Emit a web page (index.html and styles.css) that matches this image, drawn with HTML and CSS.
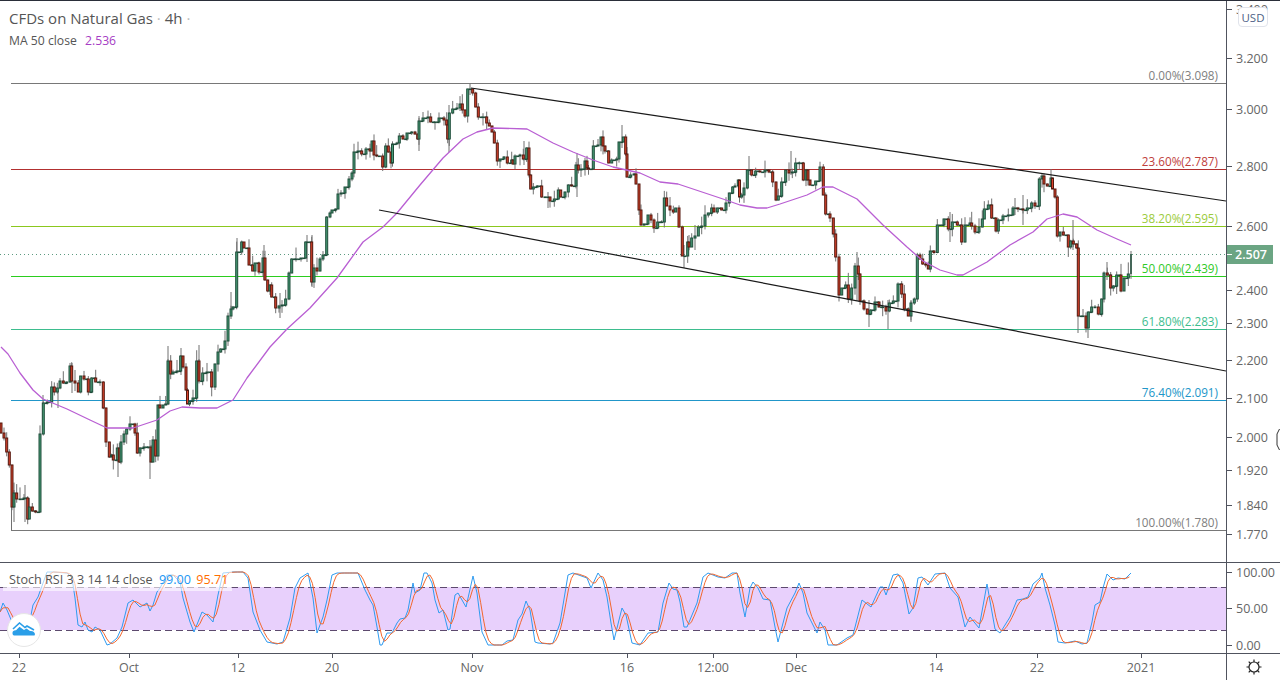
FILE: index.html
```html
<!DOCTYPE html>
<html lang="en">
<head>
    <meta charset="UTF-8">
    <title>CFDs on Natural Gas</title>
    <link rel="stylesheet" href="styles.css">
</head>
<body>
    <div class="chart">
        <!-- price pane -->
        <div class="pane mainPane">
            <svg class="plot" id="mainPlot" width="1226" height="561" viewBox="0 1 1226 561"></svg>
            <svg class="axis" id="mainAxis" width="53" height="561" viewBox="1227 1 53 561"></svg>
            <div class="legend">
                <div class="title">CFDs on Natural Gas <span class="dot">·</span> 4h <span class="dot">·</span></div>
                <div class="study">MA 50 close <span class="maValue">2.536</span></div>
            </div>
            <div class="currency">USD</div>
        </div>

        <!-- stoch rsi pane -->
        <div class="pane stochPane">
            <svg class="plot" id="stochPlot" width="1226" height="90" viewBox="0 563 1226 90"></svg>
            <svg class="axis" id="stochAxis" width="53" height="90" viewBox="1227 563 53 90"></svg>
            <div class="stochLegend">Stoch RSI 3 3 14 14 close <span class="kValue">99.00</span> <span class="dValue">95.71</span></div>
            <div class="logo">
                <svg width="24" height="16" viewBox="0 1.500 24 16">
                    <path class="logoFill" d="M1 14.500C-0.500 11.500 1.500 9.500 4 9.800L7.500 6.200L12 9.500L14.500 8L18 10.500C21.500 10 24 12.500 22.500 15L2 15Z"/>
                    <path class="logoLine" d="M1 8.500L7.500 2.500L13 7L15 5.500L22 9.500"/>
                </svg>
            </div>
        </div>

        <!-- time scale -->
        <div class="pane timePane">
            <svg class="plot" id="timePlot" width="1226" height="26" viewBox="0 654 1226 26"></svg>
            <div class="corner">
                <svg width="20" height="20" viewBox="0 0 20 20">
                    <circle class="gear" cx="10" cy="10" r="5"/>
                    <path class="gear" d="M10 2.500V5M10 15V17.500M2.500 10H5M15 10H17.500M4.700 4.700L6.500 6.500M13.500 13.500L15.300 15.300M15.300 4.700L13.500 6.500M6.500 13.500L4.700 15.300"/>
                </svg>
            </div>
        </div>
    </div>

    <script src="chart.js"></script>
</body>
</html>
```

FILE: styles.css
```css
body {
    margin: 0;
    background-color: #fff;
    font-family: "Open Sans", "Liberation Sans", sans-serif;
    color: #555;
    overflow: hidden;
}

.chart {
    height: 679px;
    border-top: 1px solid #2a2e39;
}

.pane {
    position: relative;
    display: flex;
    border-bottom: 1px solid #50535e;
}

.mainPane {
    height: 561px;
}

.stochPane {
    height: 90px;
}

.timePane {
    height: 26px;
    border-bottom: none;
}

.plot {
    display: block;
    flex: none;
}

.axis {
    display: block;
    flex: none;
    border-left: 1px solid #50535e;
}

/* legends over the plot */
.legend {
    position: absolute;
    top: 8px;
    left: 9px;
}

.title {
    font-size: 15px;
    line-height: 19px;
}

.dot {
    color: #bbb;
}

.study {
    margin-top: 5px;
    font-size: 12.200px;
    line-height: 16px;
}

.maValue {
    margin-left: 5px;
    color: #a63cc4;
}

.currency {
    position: absolute;
    top: 6px;
    left: 1238px;
    width: 28px;
    height: 18px;
    border: 1px solid #e0e3eb;
    border-radius: 4px;
    background-color: #fff;
    color: #4d5f86;
    font-size: 11.500px;
    line-height: 19px;
    text-align: center;
}

.stochLegend {
    position: absolute;
    top: 7px;
    left: 3px;
    padding: 0 4px 0 6px;
    height: 21px;
    background-color: rgba(255, 255, 255, 0.6);
    font-size: 12.600px;
    line-height: 19px;
    white-space: pre;
}

.kValue {
    margin-left: 3px;
    color: #2196f3;
}

.dValue {
    margin-left: 2px;
    color: #ff6d00;
}

.logo {
    position: absolute;
    top: 50px;
    left: 7px;
    width: 32px;
    height: 32px;
    display: flex;
    align-items: center;
    justify-content: center;
    border: 1px solid #e6e6e6;
    border-radius: 50%;
    background-color: #fff;
}

.logoFill {
    fill: #2a9ee8;
}

.logoLine {
    fill: none;
    stroke: #2a9ee8;
    stroke-width: 1.600;
}

.corner {
    width: 53px;
    flex: none;
    display: flex;
    align-items: center;
    justify-content: center;
    border-left: 1px solid #50535e;
}

.gear {
    fill: none;
    stroke: #222;
    stroke-width: 1.200;
}

/* svg text */
.tick {
    font-size: 12.500px;
    fill: #666;
}

.fibLabel {
    font-size: 11.700px;
    text-anchor: end;
}

.timeLabel {
    text-anchor: middle;
}

.priceLabel {
    font-size: 12.500px;
    font-weight: 600;
    fill: #fff;
}
```

FILE: chart.js
```javascript
// closes as [x, y] in page pixels, open = previous close
const closes = [
    [1,433],[4,438],[6.7,452],[9.3,465],[12,507],[14,493],[16.7,499],[20,499],[24,498],[27.7,519],
    [29.3,507],[32.3,511],[35.7,512],[40,434],[43.3,403],[47.3,402],[51.7,387],[54.3,392],[57.3,388],[60,381],
    [63.3,383],[66.7,382],[70,366],[71.7,381],[75,383],[78.3,392],[80.7,376],[84,379],[88.3,392],[91.7,378],
    [95.7,382],[100,382],[103.3,408],[106,442],[109.3,457],[111.5,455],[113.3,460],[117.3,448],[119.3,462],[121,442],
    [124,434],[126.7,429],[130,424],[135,433],[137.3,453],[140,448],[144,447],[148.3,447],[151,462],[153,440],
    [155.7,456],[158,405],[160,408],[163,405],[165.7,404],[168,361],[170.7,374],[173,372],[177,371],[180.7,356],
    [183,367],[186,390],[187.5,404],[189.5,401],[193,398],[196.7,361],[199,381],[202.7,373],[207,372],[211.7,387],
    [215,364],[218,352],[220.7,349],[225,341],[228,316],[231,309],[233,307],[236.7,252],[241.7,242],[244,248],
    [249,265],[252.7,271],[255,263],[259,272],[263,258],[265,280],[267.7,291],[270,285],[271.7,297],[275.7,308],
    [279,306],[282,305],[285.7,299],[289,273],[291.7,259],[296,259],[301,258],[305.7,242],[308,242],[311.7,282],
    [314,268],[317,271],[320,259],[323,255],[326.7,217],[330,213],[332,210],[335.7,209],[338,194],[341,193],
    [345,187],[349,179],[352,173],[354,152],[358,151],[361.7,154],[366,149],[370,151],[372,141],[374,155],
    [376.7,156],[382.7,167],[385.7,146],[388.3,152],[391,163],[392.5,144],[397,143],[399.3,136],[403,139],[407,133],
    [411.7,132],[415,134],[417.7,139],[419,121],[423,118],[428,117],[430.7,122],[435,122],[439,118],[444,120],
    [446.7,125],[447.7,139],[449.3,113],[452.7,109],[457,108],[460,104],[462.3,110],[465,116],[467.7,89],[472.7,93],
    [475.7,107],[478.3,117],[483,117],[486.7,123],[489.3,126],[492,132],[494.3,143],[497.3,161],[500,159],[504,157],
    [507.3,163],[511.7,160],[513,164],[515,156],[520,155],[523.3,159],[526.7,148],[529,175],[530.7,189],[533.3,187],
    [537.3,186],[541.7,197],[545,197],[550,201],[554.3,199],[558.3,190],[560.7,197],[565,192],[568.3,185],[571.7,186],
    [576,165],[578.3,170],[581,169],[585,161],[587,168],[588.5,169],[593.3,146],[598,145],[601,137],[603,146],
    [605,151],[608.7,163],[611.7,160],[616.7,159],[619,142],[623.3,137],[625.7,154],[627,177],[630.7,175],[634,174],
    [636,184],[639,210],[641,225],[644,224],[648,215],[651,220],[654,228],[657.7,222],[661.7,222],[664.3,198],
    [666.7,206],[670,210],[673.3,212],[675.7,208],[679,227],[682.3,256],[687.7,242],[689,247],[691.7,238],[695,236],
    [698.3,227],[701.7,226],[705,215],[708.3,213],[711.7,208],[714,212],[717.3,208],[721.7,210],[726,203],[729.3,193],
    [732.7,187],[735,186],[738.3,180],[739.5,197],[741.7,195],[744,188],[747.3,170],[751.7,175],[755.7,171],[760,172],
    [765,170],[769,172],[772.7,182],[776,200],[778.3,196],[781.7,182],[785.7,170],[789,173],[792.3,172],[795.7,163],
    [799.3,163],[803.3,180],[806,170],[808,180],[810,185],[815.7,181],[820,167],[823.3,195],[825.7,214],[830,218],
    [833.3,234],[835.7,257],[839,295],[841.7,288],[845.7,285],[848.3,299],[851.7,288],[855,266],[858.3,274],[860,301],
    [864,309],[867.3,314],[870.7,310],[875,302],[879,307],[882.7,307],[886,311],[889.3,303],[893.3,301],[898,284],
    [901.7,294],[904.3,309],[908.3,316],[911,303],[914.3,299],[917.3,255],[920,259],[922.7,264],[925.7,265],[928.3,269],
    [930.3,251],[934,252.5],[937.3,225],[944,219],[948.3,229],[952.3,222],[957.3,225],[961.7,242],[965,225],[970,223],
    [971.7,226],[975,232],[979,227],[982.3,219],[984.3,209],[988.3,205],[991.7,218],[996,231],[998.3,220],[1003,216],
    [1008.3,215],[1013,208],[1018,209],[1023,210],[1027.3,208],[1031.7,203],[1035,206],[1039.3,179],[1042,176],[1044,184],
    [1047.3,186],[1051,178],[1052.5,189],[1055,197],[1057.3,236],[1060,232],[1063.3,235],[1068.3,247],[1070.7,241],[1073.3,244],
    [1076.7,248],[1078.3,316],[1083,316],[1086,328],[1088.3,312],[1091.7,307],[1095,307],[1098.3,314],[1101.7,299],[1104,273],
    [1107.3,275],[1110.7,288],[1113.3,286],[1116.7,275],[1121,291],[1124,278],[1128.3,274],[1131,254]
];

// long wicks that stand out: [x, top, bottom]
const spikes = [
    [11.5,465,530],[14,490,522],[25,485,522],[43,395,420],[58,390,408],[72,363,393],[118,448,477],[150,440,479],
    [168,346,404],[181,348,375],[199,345,381],[231,292,312],[237,238,260],[264,245,280],[280,293,318],[307,235,262],
    [312,235,287],[419,118,151],[449,105,152],[470,84,95],[524,141,165],[577,153,197],[622,125,148],[548,192,208],
    [749,156,175],[791,151,175],[684,245,268],[695,225,250],[857,252,301],[888,300,329],[869,300,327],[911,300,322],
    [950,212,242],[1015,198,215],[1023,195,225],[1073,220,250],[1078,316,333],[1088,312,338],[1107,262,280]
];

const maLine = [
    [1,347],[8,354],[20,373],[33,390],[43,399],[67,409],[90,420],[107,428],[133,428],[157,420],[170,411],[182,407],
    [200,408],[217,408],[233,400],[247,378],[270,347],[287,329],[310,308],[337,278],[363,242],[383,227],[397,213],
    [420,185],[443,158],[463,139],[477,132],[493,128],[527,129],[553,143],[573,152],[593,160],[613,167],[640,173],
    [660,182],[678,184],[723,199],[740,205],[757,208],[767,208],[780,204],[807,195],[823,187],[833,187],[857,199],
    [883,225],[907,247],[923,261],[940,270],[957,275],[963,275],[987,262],[1010,245],[1033,232],[1047,219],[1063,214],
    [1077,217],[1097,230],[1117,239],[1131,245]
];

const fibLevels = [
    { y: 83.5, color: '#787878', text: '#808080', label: '0.00%(3.098)', labelY: 80 },
    { y: 169.5, color: '#b23030', text: '#c0403c', label: '23.60%(2.787)', labelY: 166 },
    { y: 226.5, color: '#8bc81e', text: '#9ccb3c', label: '38.20%(2.595)', labelY: 223 },
    { y: 276.5, color: '#2bcd1e', text: '#2fc926', label: '50.00%(2.439)', labelY: 273 },
    { y: 329.5, color: '#3dbd8e', text: '#3dbd8e', label: '61.80%(2.283)', labelY: 326 },
    { y: 400.5, color: '#2196c9', text: '#2196c9', label: '76.40%(2.091)', labelY: 397 },
    { y: 530.5, color: '#787878', text: '#808080', label: '100.00%(1.780)', labelY: 527 }
];

const priceTicks = [
    ['3.400', 9], ['3.200', 58], ['3.000', 109], ['2.800', 166], ['2.600', 226], ['2.400', 290],
    ['2.300', 323], ['2.200', 360], ['2.100', 398], ['2.000', 437], ['1.920', 470], ['1.840', 505], ['1.770', 534]
];

const stochTicks = [['100.00', 572], ['50.00', 608], ['0.00', 645]];

const timeTicks = [
    ['22', 19], ['Oct', 129], ['12', 238], ['20', 332], ['Nov', 472], ['16', 627],
    ['12:00', 713], ['Dec', 796], ['14', 936], ['22', 1037], ['2021', 1141]
];

const kLine = [
    [0,612],[3,603],[7,610],[12,622],[30,620],[33,605],[38,597],[47,572],[53,572],[67,573],[72,578],[75,598],[78,625],
    [82,627],[85,622],[88,630],[92,632],[95,627],[100,630],[107,645],[110,644],[117,638],[122,627],[128,603],[133,600],
    [140,607],[147,603],[150,611],[153,605],[157,592],[160,588],[167,575],[173,575],[180,582],[183,598],[190,622],
    [194,632],[202,612],[207,615],[213,622],[218,595],[223,573],[233,572],[243,572],[248,578],[253,612],[260,630],
    [267,642],[277,644],[283,642],[290,618],[295,588],[300,578],[308,573],[313,598],[317,633],[320,625],[323,617],
    [327,600],[332,575],[337,573],[358,573],[365,590],[370,600],[373,605],[377,627],[380,645],[382,645],[387,633],
    [392,633],[397,623],[400,619],[405,618],[408,610],[413,583],[415,593],[420,590],[424,573],[427,573],[432,583],
    [435,600],[439,613],[443,610],[448,630],[450,629],[455,595],[458,593],[466,607],[473,576],[477,593],[482,632],
    [488,645],[502,645],[507,641],[513,640],[518,620],[522,614],[526,601],[530,610],[535,642],[538,643],[550,644],
    [553,643],[560,623],[568,575],[573,573],[587,578],[591,588],[598,573],[603,580],[607,597],[611,623],[614,640],
    [622,608],[626,615],[632,643],[640,645],[648,633],[658,632],[663,603],[669,583],[673,589],[677,590],[680,602],
    [684,627],[687,627],[692,615],[697,603],[703,577],[708,573],[718,577],[725,578],[732,573],[737,573],[740,593],
    [745,617],[750,588],[753,582],[758,588],[763,599],[770,600],[775,627],[778,642],[787,608],[795,593],[799,583],
    [803,593],[807,613],[813,625],[817,633],[820,622],[825,630],[828,645],[837,645],[847,638],[853,635],[862,600],
    [871,607],[880,587],[883,587],[886,595],[893,575],[898,574],[903,583],[909,614],[913,608],[918,578],[922,577],
    [928,585],[935,574],[945,573],[950,588],[958,597],[965,627],[970,617],[979,628],[987,584],[995,629],[1000,633],
    [1010,617],[1017,600],[1023,599],[1028,597],[1033,584],[1040,578],[1042,573],[1045,588],[1050,605],[1055,625],
    [1058,642],[1065,643],[1075,641],[1082,644],[1087,643],[1092,622],[1095,605],[1100,602],[1103,588],[1107,574],
    [1113,580],[1118,578],[1125,579],[1131,573]
];

function points(list) {
    return list.map(p => p[0] + ',' + p[1]).join(' ');
}

function line(x1, y1, x2, y2, color, extra) {
    return `<line x1="${x1}" y1="${y1}" x2="${x2}" y2="${y2}" stroke="${color}" ${extra || ''}/>`;
}

function polyline(list, color, width) {
    return `<polyline points="${points(list)}" fill="none" stroke="${color}" stroke-width="${width}" stroke-linejoin="round"/>`;
}

// repeatable noise so the small wicks don't change between runs
let seed = 7;
function noise() {
    seed = (seed * 16807) % 2147483647;
    return seed / 2147483647;
}

function drawCandles() {
    let wicks = '';
    let bodies = '';
    let prevX = -1.5;
    let open = 423;

    function body(x, from, to) {
        const up = to <= from;
        const top = Math.min(from, to);
        const height = Math.max(Math.abs(to - from), 0.6);
        const fill = up ? '#479a75' : '#d8432b';
        const edge = up ? '#1f4d3a' : '#54180f';
        bodies += `<rect x="${x - 1}" y="${top}" width="2" height="${height}" fill="${fill}" stroke="${edge}"/>`;
    }

    closes.forEach(function (c) {
        const x = c[0];
        const close = c[1];
        // flat candles between the ones that moved
        while (x - prevX > 3.4) {
            prevX += 2.67;
            body(prevX, open, open);
        }
        const high = Math.min(open, close) - noise() * noise() * 14;
        const low = Math.max(open, close) + noise() * noise() * 10;
        wicks += line(x, high, x, low, '#707070');
        if (x < 1130) {
            body(x, open, close);
        } else {
            wicks += line(x, open, x, close, '#1f4d3a', 'stroke-width="1.500"');
        }
        prevX = x;
        open = close;
    });

    spikes.forEach(function (s) {
        wicks += line(s[0], s[1], s[0], s[2], '#707070');
    });

    return wicks + bodies;
}

function drawMainPlot() {
    let html = '';
    html += line(0, 254.5, 1226, 254.5, '#5c9a80', 'stroke-dasharray="1 3"');
    fibLevels.forEach(function (f) {
        html += line(11, f.y, 1226, f.y, f.color);
    });
    html += drawCandles();
    html += polyline(maLine, '#b95fd3', 1.3);
    html += line(471, 88, 1226, 201, '#1a1a1a', 'stroke-width="1.200"');
    html += line(379, 210, 1226, 371, '#1a1a1a', 'stroke-width="1.200"');
    fibLevels.forEach(function (f) {
        html += `<text class="fibLabel" x="1218" y="${f.labelY}" fill="${f.text}">${f.label}</text>`;
    });
    document.getElementById('mainPlot').innerHTML = html;
}

function drawPriceAxis(ticks) {
    let html = '';
    ticks.forEach(function (t) {
        html += line(1227, t[1] + 0.5, 1232, t[1] + 0.5, '#50535e');
        html += `<text class="tick" x="1236" y="${t[1] + 4.5}">${t[0]}</text>`;
    });
    return html;
}

function drawMainAxis() {
    let html = drawPriceAxis(priceTicks);
    html += '<rect x="1227" y="245" width="46" height="19" fill="#6ba583"/>';
    html += line(1227, 254.5, 1232, 254.5, '#fff');
    html += '<text class="priceLabel" x="1235" y="259">2.507</text>';
    // edge of the pointer, cut off by the window
    html += '<path d="M1279.500 429L1277 434V445L1279.500 450" fill="none" stroke="#333"/>';
    document.getElementById('mainAxis').innerHTML = html;
}

function drawStochPlot() {
    let html = '<rect x="0" y="587" width="1226" height="43" fill="#e8d0fc"/>';
    html += line(0, 587.5, 1226, 587.5, '#5d4a6e', 'stroke-dasharray="7 4"');
    html += line(0, 630.5, 1226, 630.5, '#5d4a6e', 'stroke-dasharray="7 4"');

    // %D is the 3 bar mean of %K
    const sampled = [];
    let j = 0;
    for (let x = 0; x <= 1131; x += 2.67) {
        while (kLine[j + 1][0] < x) j++;
        const a = kLine[j];
        const b = kLine[j + 1];
        sampled.push([x, a[1] + (b[1] - a[1]) * (x - a[0]) / (b[0] - a[0])]);
    }
    const dLine = sampled.map(function (p, i) {
        const from = Math.max(i - 2, 0);
        const part = sampled.slice(from, i + 1);
        return [p[0].toFixed(1), (part.reduce((sum, q) => sum + q[1], 0) / part.length).toFixed(1)];
    });

    html += polyline(kLine, '#2f9bf0', 1);
    html += polyline(dLine, '#f2672e', 1);
    document.getElementById('stochPlot').innerHTML = html;
    document.getElementById('stochAxis').innerHTML = drawPriceAxis(stochTicks);
}

function drawTimePlot() {
    let html = '';
    timeTicks.forEach(function (t) {
        html += line(t[1] + 0.5, 654, t[1] + 0.5, 658, '#50535e');
        html += `<text class="tick timeLabel" x="${t[1]}" y="672">${t[0]}</text>`;
    });
    document.getElementById('timePlot').innerHTML = html;
}

drawMainPlot();
drawMainAxis();
drawStochPlot();
drawTimePlot();
```
